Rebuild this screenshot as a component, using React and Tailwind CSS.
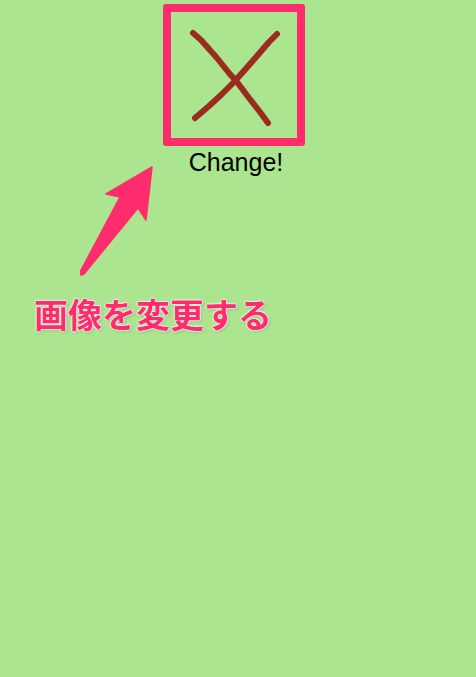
import React from "react";

function CrossMark() {
  return (
    <svg width="126" height="126" viewBox="0 0 126 126" className="block">
      {/* hand drawn looking cross */}
      <path
        d="M22 21 L 30 28 L 46 46 L 58 61 L 66 70 L 78 86 L 89 100 L 97 111"
        fill="none"
        stroke="#9b2b1f"
        strokeWidth="6"
        strokeLinecap="round"
        strokeLinejoin="round"
      />
      <path
        d="M106 22 L 98 30 L 86 44 L 72 60 L 62 71 L 50 83 L 38 94 L 24 106"
        fill="none"
        stroke="#9b2b1f"
        strokeWidth="6"
        strokeLinecap="round"
        strokeLinejoin="round"
      />
    </svg>
  );
}

function Arrow() {
  return (
    <svg
      width="80"
      height="115"
      viewBox="80 165 80 115"
      className="absolute left-[80px] top-[165px]"
    >
      <polygon
        points="152,167 146,220 138,208 84,274 81,275 80,272 120,197 106,194"
        fill="#fe2c6c"
        stroke="#fe2c6c"
        strokeWidth="1.5"
        strokeLinejoin="round"
      />
    </svg>
  );
}

export default function App() {
  return (
    <div className="relative w-[476px] h-[677px] bg-[#abe590] overflow-hidden font-['Liberation_Sans',Arial,sans-serif]">
      <div className="flex flex-col items-center w-[142px] ml-[163px] pt-[4px]">
        <div className="w-[142px] h-[142px] border-[8px] border-[#fe2c6c] rounded-[3px] bg-[#abe590]">
          <CrossMark />
        </div>
        <div className="mt-[2px] ml-[4px] text-[25px] leading-[28px] text-black">Change!</div>
      </div>

      <Arrow />

      <div className="mt-[118px] ml-[34px] text-[34px] leading-[40px] font-bold text-[#fe2c6c] font-['Noto_Sans_CJK_JP','Noto_Sans',sans-serif] [text-shadow:0_0_2px_#fff,0_0_2px_#fff,0_0_2px_#fff,0_0_1px_#fff,1px_1px_3px_rgba(0,0,0,0.3)]">
        画像を変更する
      </div>
    </div>
  );
}
